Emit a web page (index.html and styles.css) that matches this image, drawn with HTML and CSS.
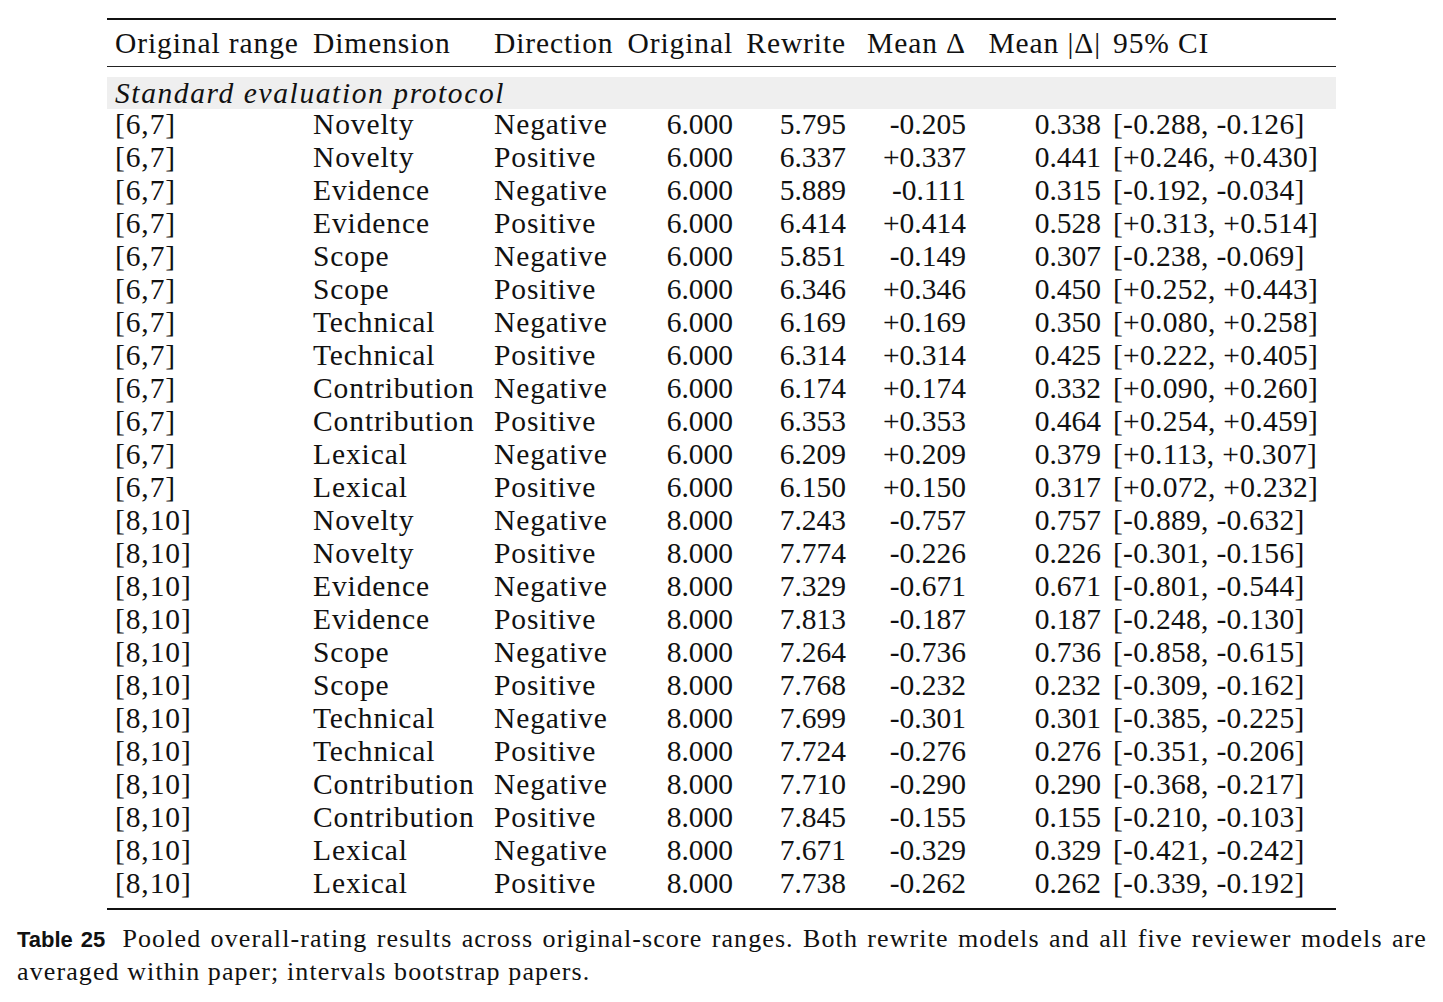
FILE: index.html
```html
<!DOCTYPE html>
<html>
<head>
  <meta charset="UTF-8">
  <title>Table 25</title>
  <link rel="stylesheet" href="styles.css">
</head>
<body>
  <div class="page">
    <table class="results">
      <colgroup>
        <col style="width: 200px">
        <col style="width: 181px">
        <col style="width: 133px">
        <col style="width: 118px">
        <col style="width: 113px">
        <col style="width: 120px">
        <col style="width: 135px">
        <col style="width: 229px">
      </colgroup>
      <thead>
        <tr>
          <th class="txt first">Original range</th>
          <th class="txt">Dimension</th>
          <th class="txt">Direction</th>
          <th class="num">Original</th>
          <th class="num">Rewrite</th>
          <th class="num">Mean &Delta;</th>
          <th class="num">Mean |&Delta;|</th>
          <th class="txt">95% CI</th>
        </tr>
      </thead>
      <tbody>
        <tr class="gap"><td colspan="8"></td></tr>
        <tr class="group"><td colspan="8">Standard evaluation protocol</td></tr>
        <tr><td class="txt first">[6,7]</td><td class="txt">Novelty</td><td class="txt">Negative</td><td class="num">6.000</td><td class="num">5.795</td><td class="num">-0.205</td><td class="num">0.338</td><td class="ci">[-0.288, -0.126]</td></tr>
        <tr><td class="txt first">[6,7]</td><td class="txt">Novelty</td><td class="txt">Positive</td><td class="num">6.000</td><td class="num">6.337</td><td class="num">+0.337</td><td class="num">0.441</td><td class="ci">[+0.246, +0.430]</td></tr>
        <tr><td class="txt first">[6,7]</td><td class="txt">Evidence</td><td class="txt">Negative</td><td class="num">6.000</td><td class="num">5.889</td><td class="num">-0.111</td><td class="num">0.315</td><td class="ci">[-0.192, -0.034]</td></tr>
        <tr><td class="txt first">[6,7]</td><td class="txt">Evidence</td><td class="txt">Positive</td><td class="num">6.000</td><td class="num">6.414</td><td class="num">+0.414</td><td class="num">0.528</td><td class="ci">[+0.313, +0.514]</td></tr>
        <tr><td class="txt first">[6,7]</td><td class="txt">Scope</td><td class="txt">Negative</td><td class="num">6.000</td><td class="num">5.851</td><td class="num">-0.149</td><td class="num">0.307</td><td class="ci">[-0.238, -0.069]</td></tr>
        <tr><td class="txt first">[6,7]</td><td class="txt">Scope</td><td class="txt">Positive</td><td class="num">6.000</td><td class="num">6.346</td><td class="num">+0.346</td><td class="num">0.450</td><td class="ci">[+0.252, +0.443]</td></tr>
        <tr><td class="txt first">[6,7]</td><td class="txt">Technical</td><td class="txt">Negative</td><td class="num">6.000</td><td class="num">6.169</td><td class="num">+0.169</td><td class="num">0.350</td><td class="ci">[+0.080, +0.258]</td></tr>
        <tr><td class="txt first">[6,7]</td><td class="txt">Technical</td><td class="txt">Positive</td><td class="num">6.000</td><td class="num">6.314</td><td class="num">+0.314</td><td class="num">0.425</td><td class="ci">[+0.222, +0.405]</td></tr>
        <tr><td class="txt first">[6,7]</td><td class="txt">Contribution</td><td class="txt">Negative</td><td class="num">6.000</td><td class="num">6.174</td><td class="num">+0.174</td><td class="num">0.332</td><td class="ci">[+0.090, +0.260]</td></tr>
        <tr><td class="txt first">[6,7]</td><td class="txt">Contribution</td><td class="txt">Positive</td><td class="num">6.000</td><td class="num">6.353</td><td class="num">+0.353</td><td class="num">0.464</td><td class="ci">[+0.254, +0.459]</td></tr>
        <tr><td class="txt first">[6,7]</td><td class="txt">Lexical</td><td class="txt">Negative</td><td class="num">6.000</td><td class="num">6.209</td><td class="num">+0.209</td><td class="num">0.379</td><td class="ci">[+0.113, +0.307]</td></tr>
        <tr><td class="txt first">[6,7]</td><td class="txt">Lexical</td><td class="txt">Positive</td><td class="num">6.000</td><td class="num">6.150</td><td class="num">+0.150</td><td class="num">0.317</td><td class="ci">[+0.072, +0.232]</td></tr>
        <tr><td class="txt first">[8,10]</td><td class="txt">Novelty</td><td class="txt">Negative</td><td class="num">8.000</td><td class="num">7.243</td><td class="num">-0.757</td><td class="num">0.757</td><td class="ci">[-0.889, -0.632]</td></tr>
        <tr><td class="txt first">[8,10]</td><td class="txt">Novelty</td><td class="txt">Positive</td><td class="num">8.000</td><td class="num">7.774</td><td class="num">-0.226</td><td class="num">0.226</td><td class="ci">[-0.301, -0.156]</td></tr>
        <tr><td class="txt first">[8,10]</td><td class="txt">Evidence</td><td class="txt">Negative</td><td class="num">8.000</td><td class="num">7.329</td><td class="num">-0.671</td><td class="num">0.671</td><td class="ci">[-0.801, -0.544]</td></tr>
        <tr><td class="txt first">[8,10]</td><td class="txt">Evidence</td><td class="txt">Positive</td><td class="num">8.000</td><td class="num">7.813</td><td class="num">-0.187</td><td class="num">0.187</td><td class="ci">[-0.248, -0.130]</td></tr>
        <tr><td class="txt first">[8,10]</td><td class="txt">Scope</td><td class="txt">Negative</td><td class="num">8.000</td><td class="num">7.264</td><td class="num">-0.736</td><td class="num">0.736</td><td class="ci">[-0.858, -0.615]</td></tr>
        <tr><td class="txt first">[8,10]</td><td class="txt">Scope</td><td class="txt">Positive</td><td class="num">8.000</td><td class="num">7.768</td><td class="num">-0.232</td><td class="num">0.232</td><td class="ci">[-0.309, -0.162]</td></tr>
        <tr><td class="txt first">[8,10]</td><td class="txt">Technical</td><td class="txt">Negative</td><td class="num">8.000</td><td class="num">7.699</td><td class="num">-0.301</td><td class="num">0.301</td><td class="ci">[-0.385, -0.225]</td></tr>
        <tr><td class="txt first">[8,10]</td><td class="txt">Technical</td><td class="txt">Positive</td><td class="num">8.000</td><td class="num">7.724</td><td class="num">-0.276</td><td class="num">0.276</td><td class="ci">[-0.351, -0.206]</td></tr>
        <tr><td class="txt first">[8,10]</td><td class="txt">Contribution</td><td class="txt">Negative</td><td class="num">8.000</td><td class="num">7.710</td><td class="num">-0.290</td><td class="num">0.290</td><td class="ci">[-0.368, -0.217]</td></tr>
        <tr><td class="txt first">[8,10]</td><td class="txt">Contribution</td><td class="txt">Positive</td><td class="num">8.000</td><td class="num">7.845</td><td class="num">-0.155</td><td class="num">0.155</td><td class="ci">[-0.210, -0.103]</td></tr>
        <tr><td class="txt first">[8,10]</td><td class="txt">Lexical</td><td class="txt">Negative</td><td class="num">8.000</td><td class="num">7.671</td><td class="num">-0.329</td><td class="num">0.329</td><td class="ci">[-0.421, -0.242]</td></tr>
        <tr class="last"><td class="txt first">[8,10]</td><td class="txt">Lexical</td><td class="txt">Positive</td><td class="num">8.000</td><td class="num">7.738</td><td class="num">-0.262</td><td class="num">0.262</td><td class="ci">[-0.339, -0.192]</td></tr>
      </tbody>
    </table>

    <div class="caption">
      <span class="line line-full"><b class="label">Table 25</b> Pooled overall-rating results across original-score ranges. Both rewrite models and all five reviewer models are</span>
      <span class="line">averaged within paper; intervals bootstrap papers.</span>
    </div>
  </div>
</body>
</html>
```

FILE: styles.css
```css
body {
  margin: 0;
  background: #ffffff;
  color: #111111;
  font-family: "Liberation Serif", "Times New Roman", serif;
}

.page {
  padding-top: 18px;
}

.results {
  margin-left: 107px;
  width: 1229px;
  table-layout: fixed;
  border-collapse: collapse;
  font-size: 29.5px;
}

.results th,
.results td {
  padding: 0 6px 3px;
  white-space: nowrap;
  font-weight: normal;
  line-height: 30px;
}

.results thead th {
  height: 46px;
  padding: 0 6px;
  line-height: 46px;
  letter-spacing: 0.9px;
  border-top: 2px solid #111111;
  border-bottom: 1px solid #222222;
}

.results .txt {
  text-align: left;
  letter-spacing: 0.9px;
}

.results .first {
  padding-left: 8px;
}

.results .num {
  text-align: right;
}

.results .ci {
  text-align: left;
  letter-spacing: 0.3px;
}

.results tr.gap td {
  height: 10px;
  line-height: 10px;
  padding: 0;
}

.results tr.group td {
  height: 32px;
  padding: 0 6px 0 8px;
  line-height: 28px;
  background: #efefef;
  font-style: italic;
  letter-spacing: 1.6px;
}

.results tr.last td {
  padding-bottom: 10px;
  border-bottom: 2px solid #111111;
}

.caption {
  margin-top: 13px;
  padding: 0 16px 0 17px;
  font-size: 26px;
  line-height: 32px;
  letter-spacing: 1.1px;
}

.caption .line {
  display: block;
}

.caption .line-full {
  text-align: justify;
  text-align-last: justify;
}

.caption .label {
  font-family: "Liberation Sans", Arial, sans-serif;
  font-weight: bold;
  font-size: 22px;
  letter-spacing: 0;
  margin-right: 8px;
}
```
